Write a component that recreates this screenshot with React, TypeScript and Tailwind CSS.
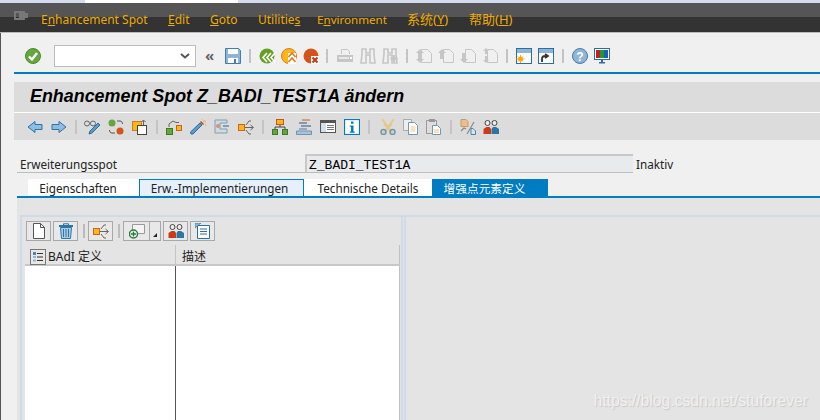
import React from 'react'

const ui = { fontFamily: '"Noto Sans", "Noto Sans CJK SC", sans-serif' }

function Ic({ children, w = 16 }: { children: React.ReactNode; w?: number }) {
  return (
    <svg width={w} height="16" viewBox={`0 0 ${w} 16`} className="block shrink-0">
      {children}
    </svg>
  )
}

const Sep = ({ className = '' }: { className?: string }) => <div className={`w-[2px] h-[14px] bg-[#c4c4c4] shrink-0 ${className}`} />

const G = '#c6c6c6'

// main toolbar icons
const Check = () => (
  <Ic>
    <circle cx="8" cy="8" r="7.5" fill="#62a83c" stroke="#4c8a2c" />
    <path d="M4 8.500 7 11.500 12 5" stroke="#fff" strokeWidth="2.400" fill="none" />
  </Ic>
)
const Save = () => (
  <Ic>
    <path d="M.5.5h13l2 2v13H.5z" fill="#8fb4d6" stroke="#3f7fb0" />
    <rect x="3" y="1" width="10" height="5" fill="#fff" />
    <rect x="3" y="10" width="10" height="5" fill="#fff" />
    <rect x="9" y="11" width="2" height="4" fill="#3f7fb0" />
  </Ic>
)
const Back = () => (
  <Ic>
    <circle cx="8" cy="8" r="7.5" fill="#62a020" />
    <path d="M8 5 4 9.500 8 14M12 5 8 9.500 12 14M16 5l-4 4.500 4 4.500" stroke="#fff" strokeWidth="1.600" fill="none" />
  </Ic>
)
const Up = () => (
  <Ic>
    <circle cx="8" cy="8" r="7.500" fill="#f8b818" stroke="#e07a20" />
    <path d="M7 5h8v11H7z" fill="#fff" />
    <path d="m7.500 9 3.500-4 3.500 4M7.500 14l3.500-4 3.500 4" stroke="#e07a20" strokeWidth="1.600" fill="none" />
  </Ic>
)
const Cancel = () => (
  <Ic>
    <circle cx="8" cy="8" r="7.500" fill="#d4541c" />
    <rect x="8" y="8" width="8" height="8" fill="#fff" />
    <path d="m9.500 9.500 5 5M14.500 9.500l-5 5" stroke="#c43a10" strokeWidth="2" />
  </Ic>
)
const Printer = () => (
  <Ic>
    <path d="M4.500 6V1.500h6l2 2V6" fill="none" stroke={G} />
    <path d="M0 7h16v7H0z" fill={G} />
    <rect x="2" y="9" width="10" height="2" fill="#e8e8e8" />
    <rect x="13" y="9" width="2" height="2" fill="#fff" />
  </Ic>
)
const Binoc = ({ plus }: { plus?: boolean }) => (
  <Ic>
    <path d="M2 1h4v4h4V1h4v5l1 9H10V7H6v8H1l1-9z" fill="none" stroke={G} strokeWidth="1.600" />
    {plus && <path d="M12 7v7M8.500 10.500h7" stroke={G} strokeWidth="2.500" />}
  </Ic>
)
const PageNav = ({ d }: { d: string }) => (
  <Ic>
    <path d="M5.500 1.500h6l4 4v9h-10z" fill="#f0f0f0" stroke={G} />
    <path d={d} fill={G} />
  </Ic>
)
const NewWin = () => (
  <Ic>
    <rect x=".5" y=".5" width="15" height="15" fill="#fff" stroke="#2a6f9e" />
    <rect x="1" y="1" width="14" height="4" fill="#8fb4d6" />
    <circle cx="4.500" cy="11" r="2.500" fill="#f8a818" />
    <path d="M4.500 7v8M.5 11h8M2 8.500l5 5M7 8.500l-5 5" stroke="#f8a818" />
  </Ic>
)
const Shortcut = () => (
  <Ic>
    <rect x=".5" y=".5" width="15" height="15" fill="#fff" stroke="#2a6f9e" />
    <rect x="1" y="1" width="14" height="4" fill="#8fb4d6" />
    <path d="M4 14v-3c0-2 1-3 3-3h2M7 6l3 2-3 2" stroke="#333" strokeWidth="1.800" fill="none" />
  </Ic>
)
const Help = () => (
  <Ic>
    <circle cx="8" cy="8" r="7.500" fill="#8fb4d6" stroke="#3f7fb0" />
    <text x="8" y="12.500" textAnchor="middle" fontSize="12" fontWeight="700" fill="#fff" fontFamily="Liberation Sans">?</text>
  </Ic>
)
const Monitor = () => (
  <Ic>
    <rect x=".5" y=".5" width="15" height="11" fill="#fff" stroke="#2a6f9e" />
    <rect x="2" y="2" width="4" height="8" fill="#c8201c" />
    <rect x="6" y="2" width="4" height="8" fill="#1c9a3c" />
    <rect x="10" y="2" width="4" height="8" fill="#1c60b0" />
    <path d="M7 12h2v2H7zM5 14h6v1.500H5z" fill="#2a6f9e" />
  </Ic>
)

// application toolbar icons
const Arrow = ({ right }: { right?: boolean }) => (
  <Ic>
    <path
      d={right ? 'M1 5.500h7V2.500l7 5.500-7 5.500v-3H1z' : 'M15 5.500H8V2.500L1 8l7 5.500v-3h7z'}
      fill="#8fbce0"
      stroke="#2a76a8"
    />
  </Ic>
)
const GlassPen = () => (
  <Ic>
    <circle cx="3" cy="4.500" r="2.500" fill="none" stroke="#666" />
    <circle cx="9" cy="4.500" r="2.500" fill="none" stroke="#666" />
    <path d="M5.500 4.500h1" stroke="#666" />
    <path d="m5 15 1-3 8-8 2 2-8 8z" fill="#5c9ac8" stroke="#2a6f9e" />
  </Ic>
)
const Swap = () => (
  <Ic>
    <circle cx="4" cy="4" r="3.500" fill="#62a83c" />
    <circle cx="12" cy="12" r="3.500" fill="#d4541c" />
    <path d="M9 2h3c1.500 0 2.500 1 2.500 3M7 14H4c-1.500 0-2.500-1-2.500-3" stroke="#555" fill="none" />
  </Ic>
)
const Copyish = () => (
  <Ic>
    <rect x=".5" y="2.500" width="9" height="9" fill="#f8b818" stroke="#d07a18" />
    <rect x="5.500" y="6.500" width="9" height="9" fill="#fff" stroke="#444" />
    <path d="M11.500 6V1M9.500 3l2-2 2 2" stroke="#666" fill="none" />
  </Ic>
)
const Branch = () => (
  <Ic>
    <rect x=".5" y="9.500" width="6" height="6" fill="#62a83c" stroke="#3c7a24" />
    <rect x="10.500" y="6.500" width="5" height="5" fill="#f8b818" stroke="#d0601c" />
    <path d="M3 8V5l4-3 3 1.500h3" stroke="#666" fill="none" />
  </Ic>
)
const Wand = () => (
  <Ic>
    <path d="m1 15-.5-2L10 4l2 2-9 9z" fill="#5c9ac8" stroke="#2a6f9e" />
    <path d="m10 3 3 3 1-1-3-3z" fill="#c83818" />
    <path d="M14 1v2M15 6h1M12 .5V1M15 3h1" stroke="#f0a020" />
  </Ic>
)
const Clamp = () => (
  <Ic>
    <path d="M1 1h12v3H6v6h7v4H1z" fill="#d0dadf" stroke="#7fa0b4" />
    <circle cx="4" cy="7" r="2" fill="#d89078" />
    <path d="M9 7h6" stroke="#7fa0b4" strokeWidth="2" />
  </Ic>
)
const Explode = () => (
  <Ic>
    <rect x=".5" y="5.500" width="6" height="6" fill="#f8b818" stroke="#d0601c" />
    <path d="M7 8.500h8M12.500 6l3 2.500-3 2.500M8 6l3-4h2M8 11l3 4h2" stroke="#666" fill="none" />
  </Ic>
)
const Org = () => (
  <Ic>
    <rect x="4.500" y=".5" width="7" height="5" fill="#f8b818" stroke="#d0501c" />
    <rect x=".5" y="10.500" width="5" height="5" fill="#62a83c" stroke="#3c7a24" />
    <rect x="10.500" y="10.500" width="5" height="5" fill="#62a83c" stroke="#3c7a24" />
    <path d="M8 6v2M3 10V8h10v2" stroke="#444" fill="none" />
  </Ic>
)
const Stack = () => (
  <Ic>
    <rect x="6" y="0" width="8" height="2" fill="#d89a78" />
    <rect x="3" y="3" width="8" height="2" fill="#7f9ab4" />
    <rect x="5" y="6" width="10" height="2" fill="#7f9ab4" />
    <rect x="3" y="9" width="8" height="2" fill="#9aaabc" />
    <path d="M.5 12v3.500h15V12z" fill="#a8c4d8" stroke="#6f94ae" />
  </Ic>
)
const Layout = () => (
  <Ic>
    <rect x=".5" y="1.500" width="15" height="12" fill="#fff" stroke="#555" />
    <rect x="1" y="2" width="14" height="2" fill="#555" />
    <rect x="1" y="4" width="5" height="9" fill="#cfe0ee" />
    <path d="M7 6.500h7M7 8.500h7M7 10.500h7" stroke="#777" />
  </Ic>
)
const Info = () => (
  <Ic>
    <rect x=".5" y=".5" width="15" height="15" fill="#fff" stroke="#007cc0" strokeWidth="1.200" />
    <path d="M7 2.500h2.500v2.200H7zM5.800 6.500h3.700v6h1.200v1.200H5.800v-1.200H7V7.700H5.800z" fill="#007cc0" />
  </Ic>
)
const Scissors = () => (
  <Ic>
    <path d="M2 0l6 8 6-8M3 14l9-9M13 14 4 5" stroke="#e8c888" strokeWidth="2" fill="none" />
    <circle cx="3.500" cy="13" r="2.500" fill="none" stroke="#6f98b4" strokeWidth="1.500" />
    <circle cx="12.500" cy="13" r="2.500" fill="none" stroke="#6f98b4" strokeWidth="1.500" />
  </Ic>
)
const CopyDoc = () => (
  <Ic>
    <path d="M.5.5h8v11h-8z" fill="#eee" stroke="#aaa" />
    <path d="M5.500 3.500h6l3 3v9h-9z" fill="#fff" stroke="#6f98b4" />
    <path d="M7.500 8h5M7.500 10h5M7.500 12h5" stroke="#e8c888" />
  </Ic>
)
const Paste = () => (
  <Ic>
    <path d="M.5 1.500h10v13H.5z" fill="#ddd" stroke="#999" />
    <rect x="3" y="0" width="6" height="3" fill="#999" />
    <path d="M6.500 6.500h5l3 3v6h-8z" fill="#fff" stroke="#6f98b4" />
    <path d="M8 11h5M8 13h5" stroke="#e8c888" />
  </Ic>
)
const Slash = () => (
  <Ic>
    <path d="M1 .5h5l2 2v5H1z" fill="#ecc08c" stroke="#c89868" />
    <path d="M11 9.500h2l2.500 2.500v3.500H11z" fill="#d4e4f0" stroke="#4a86b0" />
    <path d="M7 15 14 3M1 12l3-3 2 1" stroke="#888" fill="none" strokeWidth="1.200" />
  </Ic>
)
const Users = () => (
  <Ic>
    <circle cx="4.500" cy="4" r="2.500" fill="#eee" stroke="#444" />
    <circle cx="11.500" cy="4" r="2.500" fill="#eee" stroke="#444" />
    <path d="M.5 15v-5l3-2h3l1.500 2v5z" fill="#cc3c14" />
    <path d="M8.500 15v-5l1.500-2h3l3 2v5z" fill="#2a76a8" />
  </Ic>
)

// panel toolbar icons
const Blank = () => (
  <Ic>
    <path d="M2.500.5h7l4 4v11h-11z" fill="#fff" stroke="#555" />
    <path d="M9.500.5v4h4" fill="none" stroke="#555" />
  </Ic>
)
const Trash = () => (
  <Ic>
    <path d="M1 3h14" stroke="#2a76a8" strokeWidth="2" />
    <path d="M5.500 2V.8h5V2" stroke="#2a76a8" fill="none" />
    <path d="M2.500 4.500h11l-1 11h-9z" fill="#a8cce4" stroke="#2a76a8" />
    <path d="M5.500 6v8M8 6v8M10.500 6v8" stroke="#2a76a8" />
  </Ic>
)
const AddBox = () => (
  <Ic>
    <path d="M3.500 7.500v-6h12v9H8" fill="#f4f4f4" stroke="#999" />
    <circle cx="4.500" cy="11" r="4" fill="#fff" stroke="#2a7a3c" strokeWidth="1.500" />
    <path d="M4.500 8.500v5M2 11h5" stroke="#2a7a3c" strokeWidth="1.500" />
  </Ic>
)
const ListBack = () => (
  <Ic>
    <path d="M2.500 2.500h12v13h-12z" fill="#fff" stroke="#2a6f9e" />
    <path d="M5 6h7M5 8.500h7M5 11h7" stroke="#2a6f9e" strokeWidth="1.200" />
    <path d="M0 5V0h6z" fill="#8fb4d6" stroke="#2a6f9e" strokeWidth=".6" />
  </Ic>
)
const TreeCol = () => (
  <Ic>
    <rect x=".5" y=".5" width="15" height="15" fill="#e8e8e8" stroke="#777" />
    <rect x="3" y="3" width="3" height="3" fill="#4a86b0" />
    <path d="M7 4.500h6M7 8h6M7 11.500h6" stroke="#333" />
    <rect x="3" y="7" width="3" height="2" fill="#8fb4d6" />
    <rect x="3" y="10.500" width="3" height="2" fill="#8fb4d6" />
  </Ic>
)

function TabItem({ label, tone, className = '' }: { label: string; tone: 'plain' | 'hover' | 'active'; className?: string }) {
  const cls =
    tone === 'active'
      ? 'bg-[#007cc0] text-white'
      : tone === 'hover'
        ? 'bg-[#e5f0fa] text-[#222] border border-b-0 border-[#007cc0]'
        : 'bg-white text-[#222]'
  return <div className={`h-full flex items-center justify-center ${cls} ${className}`}>{label}</div>
}

function PanelBtn({ children, className = 'w-[25px]' }: { children: React.ReactNode; className?: string }) {
  return (
    <div className={`h-[20px] flex items-center justify-center border border-[#a8a8a8] bg-[#e8e8e8] shrink-0 ${className}`}>
      {children}
    </div>
  )
}

export default function App() {
  return (
    <div className="relative w-[820px] h-[420px] overflow-hidden bg-[#f0f0f0] flex flex-col text-[11.7px]" style={ui}>
      {/* window edge */}
      <div className="h-[3px] flex shrink-0 bg-[#d5dcf0]">
        <div className="ml-[85px] w-[153px] bg-white" />
      </div>
      <div className="h-[14px] bg-[#555555] shrink-0" />
      <div className="relative h-[15px] bg-[#333333] shrink-0">
        <div className="absolute inset-x-0 -top-[12px] h-[29px] flex items-center pl-[41px] text-[#f0ab00] text-[12px]">
          <span className="w-[127px]">E<u>n</u>hancement Spot</span>
          <span className="w-[42px]"><u>E</u>dit</span>
          <span className="w-[48px]"><u>G</u>oto</span>
          <span className="w-[59px]">Utilitie<u>s</u></span>
          <span className="w-[90px] text-[11.6px]">E<u>n</u>vironment</span>
          <span className="w-[62px] text-[13px]">系统(<u>Y</u>)</span>
          <span className="text-[13px]">帮助(<u>H</u>)</span>
        </div>
        <div className="absolute left-[14px] -top-[6px] w-[15px] h-[11px]">
          <div className="w-[11px] h-[9px] border-2 border-[#777]" />
          <div className="absolute left-[5px] top-[2px] w-[9px] h-[5px] bg-[#777]" />
        </div>
      </div>
      <div className="h-[1px] bg-[#bbbbbb] shrink-0" />

      <div className="flex-1 min-h-0 flex flex-col border-l border-[#555]">
        {/* system toolbar */}
        <div className="h-[39px] flex items-center shrink-0 pt-[6px] pl-[24px]">
          <Check />
          <div className="ml-[13px] w-[142px] h-[22px] bg-white border border-[#bcbcbc] flex items-center justify-end pr-[5px]">
            <svg width="10" height="6" viewBox="0 0 10 6"><path d="M1 1l4 3.500L9 1" stroke="#555" strokeWidth="2" fill="none" /></svg>
          </div>
          <span className="ml-[9px] w-[16px] text-[#666] text-[15px] leading-none font-bold">«</span>
          <div className="ml-[4px]"><Save /></div>
          <Sep className="ml-[8px]" />
          <div className="ml-[8px] flex gap-[6px]"><Back /><Up /><Cancel /></div>
          <Sep className="ml-[7px]" />
          <div className="ml-[9px]"><Printer /></div>
          <div className="ml-[7px] flex gap-[6px]"><Binoc /><Binoc plus /></div>
          <Sep className="ml-[8px]" />
          <div className="ml-[8px] flex gap-[6px]">
            <PageNav d="M4 1 8 5H6v4H2V5H0zM4 15l4-4H6V9H2v2H0z" />
            <PageNav d="M4 1 8 5H6v6H2V5H0z" />
            <PageNav d="M4 15 8 11H6V5H2v6H0z" />
            <PageNav d="M4 0 7 3H5v3H3V3H1zM4 15l3-3H5V8H3v4H1z" />
          </div>
          <Sep className="ml-[8px]" />
          <div className="ml-[8px] flex gap-[6px]"><NewWin /><Shortcut /></div>
          <Sep className="ml-[8px]" />
          <div className="ml-[8px] flex gap-[6px]"><Help /><Monitor /></div>
        </div>
        <div className="ml-[13px] h-[2px] bg-[#007cc0] shrink-0" />

        {/* title */}
        <div className="ml-[13px] mt-[8px] h-[30px] bg-[#dcdcdc] flex items-center pl-[16px] pb-[2px] shrink-0">
          <span className="text-[17.9px] font-bold italic text-black" style={{ fontFamily: '"Liberation Sans", sans-serif' }}>
            Enhancement Spot Z_BADI_TEST1A ändern
          </span>
        </div>
        <div className="ml-[13px] h-[1px] bg-white shrink-0" />

        {/* application toolbar */}
        <div className="ml-[13px] h-[27px] bg-[#dcdcdc] flex items-center pl-[13px] pt-[1px] shrink-0">
          <div className="flex gap-[8px]"><Arrow /><Arrow right /></div>
          <Sep className="ml-[8px]" />
          <div className="ml-[7px] flex gap-[8px]"><GlassPen /><Swap /><Copyish /></div>
          <Sep className="ml-[8px]" />
          <div className="ml-[8px] flex gap-[8px]"><Branch /><Wand /><Clamp /><Explode /></div>
          <Sep className="ml-[8px]" />
          <div className="ml-[8px] flex gap-[8px]"><Org /><Stack /><Layout /><Info /></div>
          <Sep className="ml-[8px]" />
          <div className="ml-[10px] flex gap-[7px]"><Scissors /><CopyDoc /><Paste /></div>
          <Sep className="ml-[8px]" />
          <div className="ml-[8px] flex gap-[7px]"><Slash /><Users /></div>
        </div>

        {/* header field */}
        <div className="mt-[14px] ml-[16px] w-[616px] h-[19px] flex items-center border-b border-[#bcbcbc] shrink-0 text-[#222]">
          <span className="ml-[3px] w-[285px] pt-[3px]">Erweiterungsspot</span>
          <div
            className="flex-1 h-full bg-[#e8ebee] border-t-2 border-l-2 border-[#c8c8c8] pl-[2px] text-[13px] leading-[19px] text-black"
            style={{ fontFamily: '"Liberation Mono", monospace' }}
          >
            Z_BADI_TEST1A
          </div>
        </div>
        <span className="absolute left-[636px] top-[156px] text-[#222]">Inaktiv</span>

        {/* tabs */}
        <div className="mt-[6px] ml-[16px] h-[17px] grid grid-cols-[111px_165px_128px_116px] pl-[11px] shrink-0">
          <TabItem label="Eigenschaften" tone="plain" className="pr-[11px]" />
          <TabItem label="Erw.-Implementierungen" tone="hover" className="pr-[4px]" />
          <TabItem label="Technische Details" tone="plain" />
          <TabItem label="增强点元素定义" tone="active" className="pr-[11px]" />
        </div>
        <div className="ml-[16px] h-[2px] bg-[#007cc0] shrink-0" />

        {/* content */}
        <div className="ml-[16px] flex-1 min-h-0 bg-[#e4e4e4] pt-[17px] pl-[3px] flex flex-col">
          <div className="flex-1 min-h-0 flex flex-col border-t-2 border-[#d0dbe8]">
            <div className="flex-1 min-h-0 flex">
              <div className="w-[386px] flex flex-col border-l-2 border-r-[5px] border-double border-l-[#d0dbe8] border-r-[#d0dbe8] pl-[3px]">
                <div className="h-[28px] pt-[4px] pl-[1px] flex items-start">
                  <PanelBtn><Blank /></PanelBtn>
                  <div className="ml-[2px]"><PanelBtn><Trash /></PanelBtn></div>
                  <Sep className="ml-[5px] mt-[3px] !bg-[#bbb]" />
                  <div className="ml-[3px]"><PanelBtn><Explode /></PanelBtn></div>
                  <Sep className="ml-[5px] mt-[3px] !bg-[#bbb]" />
                  <div className="ml-[3px] flex">
                    <PanelBtn className="w-[27px]"><AddBox /></PanelBtn>
                    <PanelBtn className="w-[11px] border-l-0 items-end pb-[3px]">
                      <div className="w-0 h-0 border-l-[4px] border-l-transparent border-b-[4px] border-b-[#222]" />
                    </PanelBtn>
                  </div>
                  <div className="ml-[2px]"><PanelBtn><Users /></PanelBtn></div>
                  <div className="ml-[2px]"><PanelBtn><ListBack /></PanelBtn></div>
                </div>
                <div className="h-[21px] flex items-center border-b-2 border-b-[#c8c8c8] border-r border-r-[#c0c0c0] mr-[1px] pt-[4px] text-[12px] text-[#222]">
                  <div className="w-[150px] flex items-center pl-[5px] gap-[2px]">
                    <TreeCol />
                    <span className="pt-[1px]">BAdI 定义</span>
                  </div>
                  <div className="w-[1px] h-[20px] -mt-[4px] bg-[#c4c4c4]" />
                  <span className="pl-[6px] pt-[1px]">描述</span>
                </div>
                <div className="flex-1 bg-white border-r border-[#c0c0c0] mr-[1px] flex">
                  <div className="w-[151px] border-r border-[#555]" />
                </div>
              </div>
              <div className="flex-1" />
            </div>
          </div>
        </div>
      </div>

      <span
        className="absolute right-[12px] bottom-[7px] text-[15.7px] text-[#f0f0f0] [text-shadow:1px_1px_1px_#c8c8c8]"
        style={{ fontFamily: '"Liberation Sans", sans-serif' }}
      >
        https://blog.csdn.net/stuforever
      </span>
    </div>
  )
}
